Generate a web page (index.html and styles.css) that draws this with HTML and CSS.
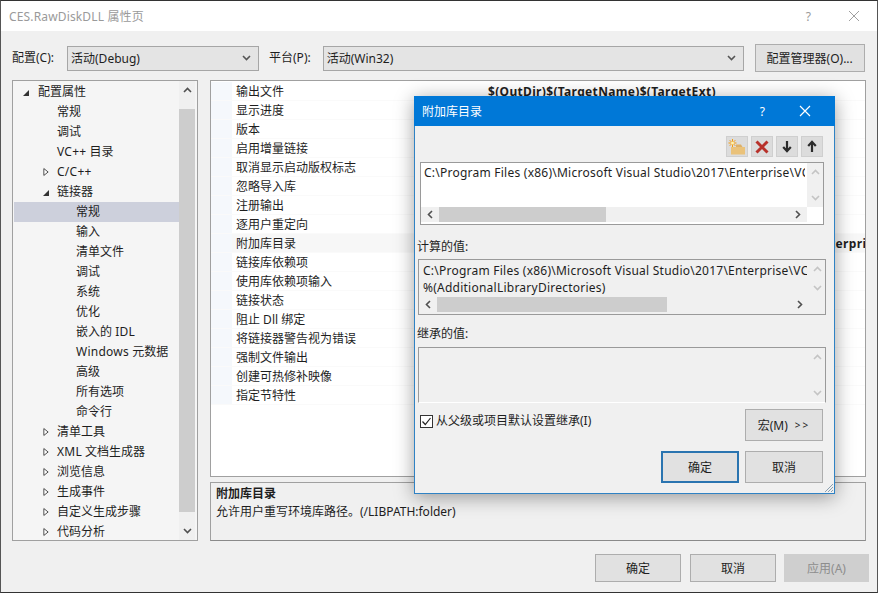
FILE: index.html
```html
<!DOCTYPE html>
<html lang="zh-CN">
<head>
<meta charset="utf-8">
<title>CES.RawDiskDLL 属性页</title>
<link rel="stylesheet" href="styles.css">
</head>
<body>
<svg class="defs" width="0" height="0">
  <symbol id="up" viewBox="0 0 9 6"><path d="M1 5 L4.5 1.5 L8 5" fill="none" stroke="currentColor" stroke-width="1.6"/></symbol>
  <symbol id="down" viewBox="0 0 9 6"><path d="M1 1 L4.5 4.5 L8 1" fill="none" stroke="currentColor" stroke-width="1.6"/></symbol>
  <symbol id="left" viewBox="0 0 6 9"><path d="M5 1 L1.5 4.5 L5 8" fill="none" stroke="currentColor" stroke-width="1.6"/></symbol>
  <symbol id="right" viewBox="0 0 6 9"><path d="M1 1 L4.5 4.5 L1 8" fill="none" stroke="currentColor" stroke-width="1.6"/></symbol>
  <symbol id="open" viewBox="0 0 7 10"><path d="M1 1 L6 5 L1 9 Z" fill="#fff" stroke="#333" stroke-width="1"/></symbol>
  <symbol id="shut" viewBox="0 0 7 7"><path d="M7 0 V7 H0 Z" fill="#333"/></symbol>
</svg>
<div class="window">
  <header class="titlebar">
    <span class="title">CES.RawDiskDLL 属性页</span>
    <span class="help">?</span>
    <svg class="close" width="12" height="12" viewBox="0 0 12 12"><path d="M1 1 L11 11 M11 1 L1 11" stroke="#a0a0a0" stroke-width="1"/></svg>
  </header>

  <div class="config-row">
    <label class="config-label">配置(C):</label>
    <div class="select select-config"><span>活动(Debug)</span><svg class="chev"><use href="#down"/></svg></div>
    <label class="config-label platform-label">平台(P):</label>
    <div class="select select-platform"><span>活动(Win32)</span><svg class="chev"><use href="#down"/></svg></div>
    <button class="btn btn-manager">配置管理器(O)...</button>
  </div>

  <div class="main">
    <nav class="tree">
      <ul class="tree-list">
        <li class="node l0"><svg class="tw shut"><use href="#shut"/></svg>配置属性</li>
        <li class="node l1">常规</li>
        <li class="node l1">调试</li>
        <li class="node l1"><span class="latin">VC++</span> 目录</li>
        <li class="node l1"><svg class="tw open"><use href="#open"/></svg><span class="latin">C/C++</span></li>
        <li class="node l1"><svg class="tw shut"><use href="#shut"/></svg>链接器</li>
        <li class="node l2 selected">常规</li>
        <li class="node l2">输入</li>
        <li class="node l2">清单文件</li>
        <li class="node l2">调试</li>
        <li class="node l2">系统</li>
        <li class="node l2">优化</li>
        <li class="node l2">嵌入的 <span class="latin">IDL</span></li>
        <li class="node l2"><span class="latin">Windows</span> 元数据</li>
        <li class="node l2">高级</li>
        <li class="node l2">所有选项</li>
        <li class="node l2">命令行</li>
        <li class="node l1"><svg class="tw open"><use href="#open"/></svg>清单工具</li>
        <li class="node l1"><svg class="tw open"><use href="#open"/></svg><span class="latin">XML</span> 文档生成器</li>
        <li class="node l1"><svg class="tw open"><use href="#open"/></svg>浏览信息</li>
        <li class="node l1"><svg class="tw open"><use href="#open"/></svg>生成事件</li>
        <li class="node l1"><svg class="tw open"><use href="#open"/></svg>自定义生成步骤</li>
        <li class="node l1"><svg class="tw open"><use href="#open"/></svg>代码分析</li>
      </ul>
      <div class="vbar tree-bar">
        <svg class="arrow"><use href="#up"/></svg>
        <div class="vthumb"></div>
        <svg class="arrow"><use href="#down"/></svg>
      </div>
    </nav>

    <div class="right">
      <section class="grid">
        <div class="row"><span class="name">输出文件</span><span class="value">$(OutDir)$(TargetName)$(TargetExt)</span></div>
        <div class="row"><span class="name">显示进度</span></div>
        <div class="row"><span class="name">版本</span></div>
        <div class="row"><span class="name">启用增量链接</span></div>
        <div class="row"><span class="name">取消显示启动版权标志</span></div>
        <div class="row"><span class="name">忽略导入库</span></div>
        <div class="row"><span class="name">注册输出</span></div>
        <div class="row"><span class="name">逐用户重定向</span></div>
        <div class="row current"><span class="name">附加库目录</span><span class="value">C:\Program Files (x86)\Microsoft Visual Studio\2017\Enterprise\VC</span></div>
        <div class="row"><span class="name">链接库依赖项</span></div>
        <div class="row"><span class="name">使用库依赖项输入</span></div>
        <div class="row"><span class="name">链接状态</span></div>
        <div class="row"><span class="name">阻止 Dll 绑定</span></div>
        <div class="row"><span class="name">将链接器警告视为错误</span></div>
        <div class="row"><span class="name">强制文件输出</span></div>
        <div class="row"><span class="name">创建可热修补映像</span></div>
        <div class="row"><span class="name">指定节特性</span></div>
      </section>
      <section class="desc">
        <strong class="desc-title">附加库目录</strong>
        <p class="desc-text">允许用户重写环境库路径。(/LIBPATH:folder)</p>
      </section>
    </div>
  </div>

  <footer class="footer">
    <button class="btn btn-foot">确定</button>
    <button class="btn btn-foot">取消</button>
    <button class="btn btn-foot disabled">应用(A)</button>
  </footer>

  <div class="dialog">
    <header class="dlg-title">
      <span class="dlg-name">附加库目录</span>
      <span class="dlg-help">?</span>
      <svg class="dlg-close" width="12" height="12" viewBox="0 0 12 12"><path d="M1 1 L11 11 M11 1 L1 11" stroke="#fff" stroke-width="1.2"/></svg>
    </header>
    <div class="dlg-body">
      <div class="tools">
        <button class="tool"><svg width="18" height="16" viewBox="0 0 18 16"><path d="M3 8 H17 V15.5 H3 Z" fill="#eac27a"/><path d="M8 5.5 H13 L14.5 8 H8 Z" fill="#ddb067"/><path d="M4.5 0 V8 M0.5 4 H8.5 M1.7 1.2 L7.3 6.8 M7.3 1.2 L1.7 6.8" stroke="#f59a0c" stroke-width="1"/><circle cx="4.5" cy="4" r="1.5" fill="#fff3b0"/></svg></button>
        <button class="tool"><svg width="14" height="14" viewBox="0 0 14 14"><path d="M1.5 1.5 L12.5 12.5 M12.5 1.5 L1.5 12.5" stroke="#b8312a" stroke-width="3"/></svg></button>
        <button class="tool"><svg width="10" height="13" viewBox="0 0 10 13"><path d="M5 1 V11 M1.2 7 L5 11.2 L8.8 7" fill="none" stroke="#2b2b2b" stroke-width="2.2"/></svg></button>
        <button class="tool"><svg width="10" height="13" viewBox="0 0 10 13"><path d="M5 12 V2 M1.2 6 L5 1.8 L8.8 6" fill="none" stroke="#2b2b2b" stroke-width="2.2"/></svg></button>
      </div>

      <div class="box box-edit">
        <div class="box-main">
          <div class="box-text"><div class="line">C:\Program Files (x86)\Microsoft Visual Studio\2017\Enterprise\VC\bin</div></div>
          <div class="vbar pale"><svg class="arrow"><use href="#up"/></svg><svg class="arrow"><use href="#down"/></svg></div>
        </div>
        <div class="hbar">
          <svg class="harrow"><use href="#left"/></svg>
          <div class="htrack"><div class="hthumb" style="width:167px"></div></div>
          <svg class="harrow"><use href="#right"/></svg>
        </div>
      </div>

      <div class="field-label label-calc">计算的值:</div>
      <div class="box box-calc">
        <div class="box-main">
          <div class="box-text"><div class="line">C:\Program Files (x86)\Microsoft Visual Studio\2017\Enterprise\VC\bin</div><div class="line">%(AdditionalLibraryDirectories)</div></div>
          <div class="vbar pale"><svg class="arrow"><use href="#up"/></svg><svg class="arrow"><use href="#down"/></svg></div>
        </div>
        <div class="hbar">
          <svg class="harrow"><use href="#left"/></svg>
          <div class="htrack"><div class="hthumb" style="width:230px"></div></div>
          <svg class="harrow"><use href="#right"/></svg>
        </div>
      </div>

      <div class="field-label label-inh">继承的值:</div>
      <div class="box box-inh">
        <div class="box-main">
          <div class="box-text"></div>
          <div class="vbar pale"><svg class="arrow"><use href="#up"/></svg><svg class="arrow"><use href="#down"/></svg></div>
        </div>
      </div>

      <div class="dlg-options">
        <label class="check"><span class="checkbox"><svg width="11" height="11" viewBox="0 0 11 11"><path d="M1.5 5.5 L4.3 8.5 L9.5 2" fill="none" stroke="#222" stroke-width="1.2"/></svg></span>从父级或项目默认设置继承(I)</label>
        <button class="btn btn-dlg">宏(M)<span class="chevrons">&gt;&gt;</span></button>
      </div>
      <div class="dlg-actions">
        <button class="btn btn-dlg primary">确定</button>
        <button class="btn btn-dlg">取消</button>
      </div>
    </div>
    <svg class="grip" width="11" height="11" viewBox="0 0 11 11"><path d="M10 2 L2 10 M10 5 L5 10 M10 8 L8 10" stroke="#8aa0b0" stroke-width="1"/></svg>
  </div>
</div>
</body>
</html>
```
FILE: styles.css
```css
* { box-sizing: border-box; }
html, body { margin: 0; padding: 0; }
body {
  width: 878px;
  height: 593px;
  overflow: hidden;
  font-family: "Noto Sans", "Noto Sans CJK SC", sans-serif;
  font-size: 12px;
  color: #1e1e1e;
}
.defs { position: absolute; }
button { font: inherit; color: inherit; margin: 0; padding: 0; }
.latin { letter-spacing: 0.25px; }

.window {
  position: relative;
  width: 878px;
  height: 593px;
  border: 1px solid #555;
  border-top-color: #333;
  border-bottom-color: #333;
  background: #f0f0f0;
  display: flex;
  flex-direction: column;
  overflow: hidden;
}

.titlebar {
  height: 30px;
  flex: none;
  background: #fff;
  display: flex;
  align-items: center;
  padding: 0 17px 0 8px;
}
.title { color: #9a9a9a; flex: 1; letter-spacing: 0.15px; }
.help { color: #9a9a9a; margin-right: 37px; }

.config-row {
  height: 28px;
  margin-top: 13px;
  padding-left: 11px;
  display: flex;
  align-items: center;
  flex: none;
}
.config-label { white-space: nowrap; line-height: 16px; }
.platform-label { margin-left: 10px; }
.select {
  height: 25px;
  background: #e4e4e4;
  border: 1px solid #a6a6a6;
  display: flex;
  align-items: center;
  justify-content: space-between;
  padding: 0 5px 0 3px;
}
.select-config { width: 192px; margin-left: 13px; }
.select-platform { width: 421px; margin-left: 12px; }
.chev { width: 9px; height: 6px; color: #555; margin-right: 2px; }

.btn {
  background: #e1e1e1;
  border: 1px solid #adadad;
  display: flex;
  align-items: center;
  justify-content: center;
  white-space: nowrap;
}
.btn-manager { width: 110px; height: 28px; margin-left: 11px; }

.main {
  flex: none;
  margin-top: 8px;
  padding-left: 11px;
  display: flex;
  gap: 12px;
  height: 461px;
}

.tree {
  width: 186px;
  height: 461px;
  border: 1px solid #a0a0a0;
  background: #f5f5f5;
  display: flex;
  padding: 0 2px 0 1px;
}
.tree-list { list-style: none; margin: 0; padding: 1px 0 0; flex: 1; overflow: hidden; }
.node {
  position: relative;
  height: 20px;
  line-height: 20px;
  white-space: nowrap;
}
.l0 { padding-left: 24px; }
.l1 { padding-left: 43px; }
.l2 { padding-left: 62px; }
.selected { background: #cdd0dc; }
.tw { position: absolute; }
.l0 .shut { left: 9px; top: 8px; width: 6px; height: 6px; }
.l1 .shut { left: 29px; top: 8px; width: 6px; height: 6px; }
.open { left: 29px; top: 5px; width: 6px; height: 10px; }

.vbar {
  width: 16px;
  flex: none;
  display: flex;
  flex-direction: column;
  align-items: center;
  justify-content: space-between;
  background: #f0f0f0;
}
.tree-bar { background: #f0f0f0; }
.arrow { width: 9px; height: 6px; color: #505050; margin: 6px 0; flex: none; }
.vthumb { width: 16px; height: 403px; background: #cdcdcd; flex: none; }
.pale { background: #f0f0f0; }
.pale .arrow { color: #c4c4c4; }

.right { width: 656px; display: flex; flex-direction: column; gap: 5px; }
.grid {
  height: 397px;
  background: #fff;
  border: 1px solid #a0a0a0;
  padding-top: 1px;
  overflow: hidden;
}
.row {
  height: 19px;
  line-height: 19px;
  display: flex;
  white-space: nowrap;
  border-bottom: 1px solid #fafafa;
  background: linear-gradient(to right, #f5f8fc 21px, transparent 21px);
}
.row.current { background: linear-gradient(to right, #f5f8fc 21px, #f7f7f7 21px); }
.name { width: 277px; padding-left: 25px; flex: none; }
.value { font-weight: 700; letter-spacing: 0.33px; }

.desc {
  height: 59px;
  border: 1px solid #a0a0a0;
  border-bottom-color: #8a8a8a;
  padding: 2px 5px;
  background: #f0f0f0;
}
.desc-title { display: block; line-height: 18px; font-weight: 700; }
.desc-text { margin: 0; line-height: 18px; }

.footer {
  flex: none;
  margin-top: 13px;
  padding-right: 8px;
  display: flex;
  justify-content: flex-end;
  gap: 9px;
}
.btn-foot { width: 86px; height: 28px; }
.disabled { width: 85px; margin-left: -1px; background: #cfcfcf; border-color: #cfcfcf; color: #8d8d8d; }

.dialog {
  position: absolute;
  left: 413px;
  top: 95px;
  width: 421px;
  height: 398px;
  background: #f0f0f0;
  border: 1px solid #2f82c4;
  border-top: 0;
  box-shadow: 0 3px 18px rgba(0, 0, 0, 0.38);
  display: flex;
  flex-direction: column;
}
.dlg-title {
  height: 30px;
  flex: none;
  margin: 0 -1px;
  background: #0078d7;
  color: #fff;
  display: flex;
  align-items: center;
  padding: 0 24px 0 8px;
}
.dlg-name { flex: 1; }
.dlg-help { margin-right: 34px; }
.dlg-body { padding: 10px 11px 0 4px; flex: 1; display: flex; flex-direction: column; }

.tools { display: flex; justify-content: flex-end; gap: 3px; height: 21px; flex: none; }
.tool {
  width: 22px;
  height: 21px;
  background: #dcdcdc;
  border: 1px solid #cfcfcf;
  display: flex;
  align-items: center;
  justify-content: center;
}

.box { border: 1px solid #9a9a9a; display: flex; flex-direction: column; flex: none; }
.box-edit { margin: 5px 0 0 1px; height: 63px; width: 404px; background: #fff; }
.box-calc { height: 56px; width: 408px; margin-left: -1px; background: #f0f0f0; }
.box-inh { height: 56px; width: 408px; margin-left: -1px; background: #f0f0f0; border-bottom-color: #fff; }
.box-main { flex: 1; display: flex; min-height: 0; }
.box-text { flex: 1; min-width: 0; overflow: hidden; margin-right: 2px; padding: 1px 0 0 3px; }
.box-calc .box-text { padding: 2px 0 0 4px; }
.line { height: 17px; line-height: 17px; white-space: nowrap; letter-spacing: 0.24px; }
.hbar {
  height: 15px;
  flex: none;
  display: flex;
  align-items: center;
  background: #f0f0f0;
  margin-right: 16px;
  margin-bottom: 2px;
}
.harrow { width: 6px; height: 9px; color: #505050; margin: 0 6px; flex: none; }
.htrack { flex: 1; height: 15px; }
.hthumb { height: 15px; background: #cdcdcd; }

.field-label { line-height: 18px; margin-left: -2px; flex: none; }
.label-calc { margin-top: 13px; margin-bottom: 3px; }
.label-inh { margin-top: 10px; margin-bottom: 4px; }

.dlg-options { display: flex; justify-content: space-between; align-items: flex-start; margin-top: 6px; flex: none; }
.check { display: flex; align-items: center; line-height: 18px; margin: 3px 0 0 1px; }
.checkbox {
  width: 13px;
  height: 13px;
  border: 1px solid #333;
  background: #fff;
  display: flex;
  align-items: center;
  justify-content: center;
  margin-right: 3px;
}
.btn-dlg { width: 78px; height: 32px; }
.chevrons { margin-left: 7px; font-size: 10px; letter-spacing: 2px; }
.dlg-actions { display: flex; justify-content: flex-end; gap: 6px; margin-top: 10px; flex: none; }
.primary { border: 2px solid #2a74b0; }
.grip { position: absolute; right: 0; bottom: 0; }
```
